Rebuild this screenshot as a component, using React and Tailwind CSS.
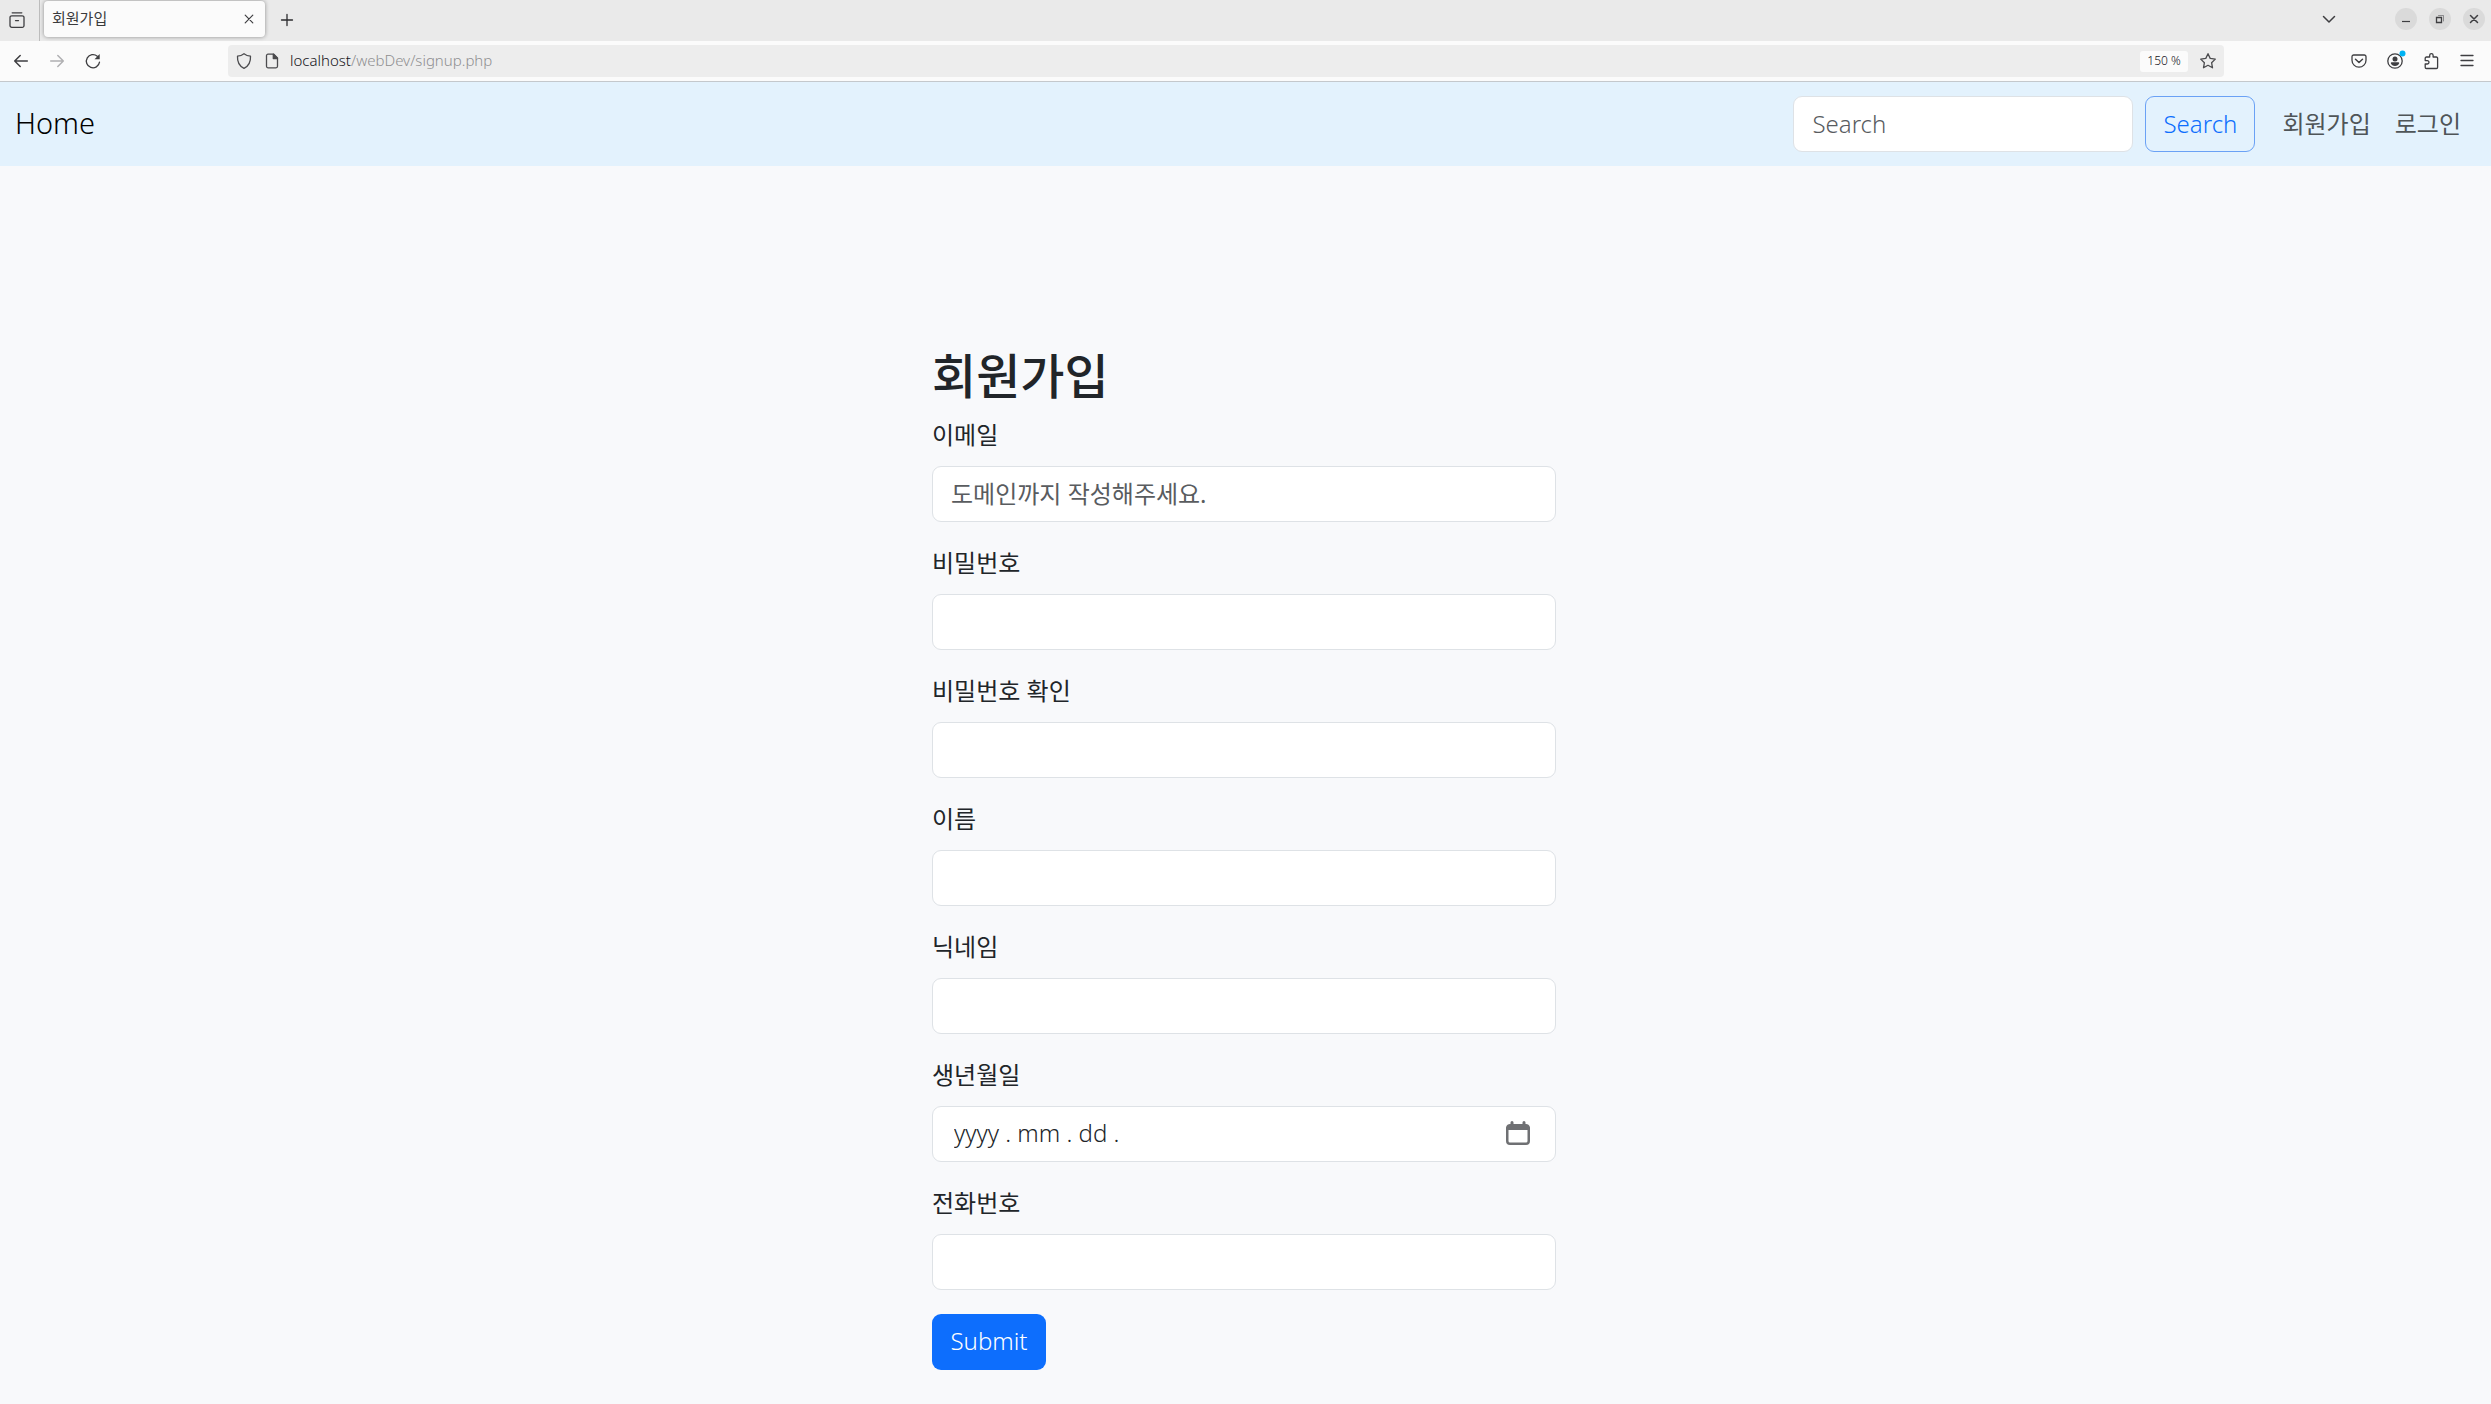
const CONTROL = 'h-14 rounded-[9px] border border-[#dee2e6] bg-white px-[18px] pb-0.5 text-2xl text-[#212529] placeholder:text-[#595c5f] placeholder:opacity-100'

const FIELDS = [
  { id: 'email', label: '이메일', type: 'email', placeholder: '도메인까지 작성해주세요.' },
  { id: 'password', label: '비밀번호', type: 'password' },
  { id: 'password-check', label: '비밀번호 확인', type: 'password' },
  { id: 'name', label: '이름', type: 'text' },
  { id: 'nickname', label: '닉네임', type: 'text' },
  { id: 'birth', label: '생년월일', type: 'date' },
  { id: 'phone', label: '전화번호', type: 'tel' },
]

// 16x16 line icons of the browser chrome
function Svg({ className = '', children }) {
  return (
    <svg viewBox="0 0 16 16" width="16" height="16" fill="none" stroke="currentColor" strokeWidth="1.3"
      strokeLinecap="round" strokeLinejoin="round" className={`shrink-0 overflow-visible ${className}`} aria-hidden="true">
      {children}
    </svg>
  )
}

function IconButton({ label, className = '', children }) {
  return (
    <button type="button" aria-label={label} className={`flex size-9 shrink-0 items-center justify-center ${className}`}>
      {children}
    </button>
  )
}

function TabStrip() {
  return (
    <div className="flex h-[41px] bg-[#eaeaea] pr-[6px]">
      <div className="flex w-10 items-center justify-center border-r border-[#bdbdbd] pr-[6px] pb-0.5">
        <IconButton label="Recent browsing">
          <Svg>
            <path d="M3.2.8h9.6" />
            <path d="M1 6.2V5.6a1.8 1.8 0 0 1 1.8-1.8h10.4A1.8 1.8 0 0 1 15 5.6v8a1.8 1.8 0 0 1-1.8 1.8H2.8A1.8 1.8 0 0 1 1 13.6z" />
            <path d="M6.5 8.6h3" />
          </Svg>
        </IconButton>
      </div>
      <div className="ml-1 mt-px flex h-9 w-[221px] items-center justify-between rounded bg-[#fbfbfb] pl-2 shadow-[0_0_4px_rgba(0,0,0,0.4)]">
        <span className="pb-0.5 text-[15px] leading-none text-[#3a3a3c]">회원가입</span>
        <button type="button" aria-label="Close tab" className="flex size-8 items-center justify-center">
          <Svg><path d="M4.2 4.2l7.6 7.6M11.8 4.2l-7.600 7.600" strokeWidth="1.2" /></Svg>
        </button>
      </div>
      <IconButton label="New tab" className="ml-1 mt-0.5">
        <Svg className="text-[#2b2b2e]"><path d="M8 2.5v11M2.5 8h11" /></Svg>
      </IconButton>
      <div className="flex-1" />
      <div className="flex items-center gap-3 pb-[3px]">
        <IconButton label="List all tabs" className="mr-9">
          <Svg><path d="M2.5 5.5L8 11l5.5-5.5" strokeWidth="1.5" /></Svg>
        </IconButton>
        <button type="button" aria-label="Minimize" className="flex size-[22px] items-center justify-center rounded-full bg-[#dadada]">
          <Svg><path d="M4 10.5h8" strokeLinecap="butt" strokeWidth="1.2" /></Svg>
        </button>
        <button type="button" aria-label="Restore" className="flex size-[22px] items-center justify-center rounded-full bg-[#dadada]">
          <Svg>
            <path d="M4.5 6.5h5v5h-5z" strokeLinejoin="miter" />
            <path d="M6.5 4.5h5v5.5" strokeWidth="1" className="opacity-50" />
          </Svg>
        </button>
        <button type="button" aria-label="Close" className="flex size-[22px] items-center justify-center rounded-full bg-[#dadada]">
          <Svg><path d="M4.5 4.5l7 7M11.5 4.5l-7 7" strokeWidth="1.5" /></Svg>
        </button>
      </div>
    </div>
  )
}

function Toolbar() {
  return (
    <div className="flex h-[41px] items-center border-b border-[#c4c8cc] bg-[#fbfbfb] pl-[3px] pr-[6px]">
      <IconButton label="Back">
        <Svg><path d="M14.3 8H1.7M7.2 2.5L1.7 8l5.5 5.500" strokeWidth="1.5" /></Svg>
      </IconButton>
      <IconButton label="Forward" className="text-[#b0b0b2]">
        <Svg><path d="M1.7 8h12.6M8.8 2.5L14.3 8l-5.5 5.500" strokeWidth="1.5" /></Svg>
      </IconButton>
      <IconButton label="Reload">
        <Svg>
          <path d="M14.5 9.2A6.6 6.6 0 1 1 12.3 3.2" />
          <path d="M14.7 1v5.2H9.5z" fill="currentColor" stroke="none" />
        </Svg>
      </IconButton>
      <div className="ml-[117px] flex h-8 flex-1 items-center rounded bg-[#ededed] px-2">
        <Svg className="text-[#4b4b4e]"><path d="M8 .7c2 1.6 4 2.3 6.5 2.5.3 5.5-1.7 9.8-6.5 12.1C3.2 13 1.2 8.7 1.5 3.2 4 3 6 2.300 8 .7z" /></Svg>
        <Svg className="ml-3 text-[#4b4b4e]">
          <path d="M9.800 1.2H4A1.5 1.5 0 0 0 2.5 2.7v10.6A1.5 1.5 0 0 0 4 14.8h8a1.5 1.5 0 0 0 1.500-1.500V5z" />
          <path d="M9.3 1.2v4.300h4.200z" fill="currentColor" />
        </Svg>
        <div className="ml-[10px] flex-1 pb-0.5 text-[15px] font-[350] leading-none text-[#8f8f91]">
          <span className="text-[#15141a]">localhost</span>/webDev/signup.php
        </div>
        <button type="button" className="h-[21px] w-12 rounded-[3px] bg-[#fbfbfb] text-xs font-[350] text-[#15141a]">150 %</button>
        <button type="button" aria-label="Bookmark this page" className="ml-3 text-[#4b4b4e]">
          <Svg><path d="M8 .7l2.2 4.700 5.100.700-3.700 3.600.900 5.100L8 12.300l-4.500 2.500.900-5.100L.700 6.100l5.100-.700z" /></Svg>
        </button>
      </div>
      <div className="ml-[117px] flex">
        <IconButton label="Save to Pocket">
          <Svg>
            <path d="M2.7 2h10.600A1.7 1.7 0 0 1 15 3.7v3.500a7 7 0 0 1-14 0V3.7A1.7 1.7 0 0 1 2.7 2z" />
            <path d="M4.5 6.2L8 9.5l3.500-3.300" strokeWidth="1.5" />
          </Svg>
        </IconButton>
        <IconButton label="Account">
          <Svg>
            <circle cx="8" cy="8" r="7.2" />
            <circle cx="8" cy="6" r="2.5" fill="currentColor" stroke="none" />
            <path d="M3.7 10a1 1 0 0 1 1-.7h6.6a1 1 0 0 1 1 .7c-.6 1.8-2.2 3-4.3 3s-3.7-1.2-4.3-3z" fill="currentColor" stroke="none" />
            <circle cx="15.5" cy=".5" r="3" fill="#00b3f4" stroke="none" />
          </Svg>
        </IconButton>
        <IconButton label="Extensions">
          <Svg>
            <path d="M6.7 4V2.3a1.700 1.700 0 0 1 3.400 0V4h3.300a1.2 1.2 0 0 1 1.200 1.200v9.100a1.2 1.2 0 0 1-1.200 1.200H3.400a1.2 1.2 0 0 1-1.200-1.200V11h2.100a1.700 1.700 0 0 0 0-3.400H2.200V5.200A1.2 1.2 0 0 1 3.400 4z" />
          </Svg>
        </IconButton>
        <IconButton label="Menu">
          <Svg><path d="M2 2.5h12M2 7.500h12M2 12.500h12" /></Svg>
        </IconButton>
      </div>
    </div>
  )
}

function Navbar() {
  return (
    <nav className="flex h-[84px] items-center bg-[#e3f2fd] px-[15px]">
      <a href="#home" className="pb-0.5 text-[29px] font-[350] text-black">Home</a>
      <form className="ml-auto flex gap-3" onSubmit={(e) => e.preventDefault()}>
        <input type="search" aria-label="Search" placeholder="Search" className={`${CONTROL} w-[340px] font-[350]`} />
        <button type="submit" className="h-14 w-[110px] rounded-[9px] border border-[#6aa1f5] text-2xl font-[350] text-[#0d6efd]">Search</button>
      </form>
      <div className="ml-[15px] flex text-2xl text-[#4f5558]">
        <a href="#signup" className="px-3">회원가입</a>
        <a href="#login" className="pl-3 pr-[15px]">로그인</a>
      </div>
    </nav>
  )
}

function DateInput({ id }) {
  return (
    <div className="flex h-14 items-center rounded-[9px] border border-[#dee2e6] bg-white pb-0.5 pl-[21px] pr-[25px]">
      <input id={id} type="text" placeholder="yyyy . mm . dd ."
        className="min-w-0 flex-1 text-2xl font-[350] text-[#212529] outline-none placeholder:text-[#212529] placeholder:opacity-100" />
      <button type="button" aria-label="달력 열기" className="text-[#6f7073]">
        <svg viewBox="0 0 24 24" width="24" height="24" fill="currentColor" aria-hidden="true">
          <path fillRule="evenodd" d="M4.500 1.500a1.500 1.500 0 0 1 3 0V3h9V1.500a1.500 1.500 0 0 1 3 0V3A4 4 0 0 1 24 6.500V20a4 4 0 0 1-4 4H4a4 4 0 0 1-4-4V6.500A4 4 0 0 1 4.500 3zM2.500 9v11A1.500 1.500 0 0 0 4 21.500h16a1.500 1.500 0 0 0 1.500-1.500V9z" />
        </svg>
      </button>
    </div>
  )
}

function SignupForm() {
  return (
    <form className="mx-auto w-[624px] pt-[182px] pb-8" onSubmit={(e) => e.preventDefault()}>
      <h1 className="mb-3.5 text-5xl font-medium leading-[56px]">회원가입</h1>
      {FIELDS.map((f) => (
        <div key={f.id} className="mb-6">
          <label htmlFor={f.id} className="mb-3.5 block text-2xl leading-[34px]">{f.label}</label>
          {f.type === 'date'
            ? <DateInput id={f.id} />
            : <input id={f.id} type={f.type} placeholder={f.placeholder} className={`${CONTROL} block w-full`} />}
        </div>
      ))}
      <button type="submit" className="h-14 w-[114px] rounded-[9px] bg-[#0d6efd] pb-0.5 text-2xl font-[350] text-white">Submit</button>
    </form>
  )
}

export default function App() {
  return (
    <div className="min-h-screen bg-[#f8f9fb] font-['Noto_Sans','Noto_Sans_CJK_KR',sans-serif] text-[#212529]">
      <header className="text-[#3e3e41]">
        <TabStrip />
        <Toolbar />
      </header>
      <Navbar />
      <main className="pr-[3px]">
        <SignupForm />
      </main>
    </div>
  )
}
